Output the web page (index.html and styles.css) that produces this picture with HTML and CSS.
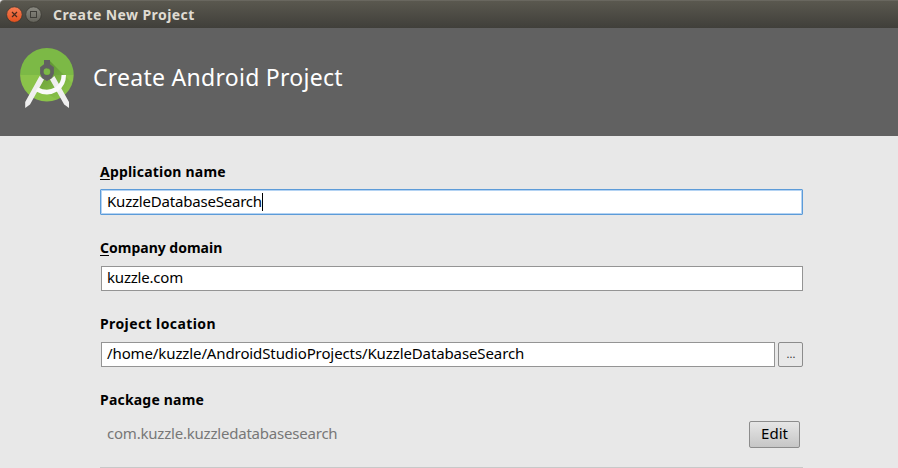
FILE: index.html
```html
<!DOCTYPE html>
<html lang="en">
<head>
<meta charset="utf-8">
<title>Create New Project</title>
<link rel="stylesheet" href="styles.css">
</head>
<body>
<div class="titlebar">
  <svg class="controls" width="37" height="18" viewBox="0 0 37 18">
    <defs>
      <linearGradient id="close" x1="0" y1="0" x2="0" y2="1"><stop offset="0" stop-color="#f67e55"/><stop offset="1" stop-color="#e2501d"/></linearGradient>
      <linearGradient id="max" x1="0" y1="0" x2="0" y2="1"><stop offset="0" stop-color="#8b8a82"/><stop offset="1" stop-color="#64635b"/></linearGradient>
    </defs>
    <circle cx="9.4" cy="8.6" r="7.8" fill="url(#close)" stroke="#393731" stroke-width=".8"/>
    <path d="M7 6l5 5m0-5l-5 5" stroke="#47291d" stroke-width="1.2"/>
    <circle cx="28.5" cy="8.6" r="7.8" fill="url(#max)" stroke="#393731" stroke-width=".8"/>
    <rect x="25.5" y="5.5" width="6" height="6" fill="none" stroke="#3e3d38"/>
  </svg>
  <span class="title">Create New Project</span>
</div>
<header class="banner">
  <svg class="logo" width="56" height="62" viewBox="19 47 56 62">
    <defs><clipPath id="disc"><circle cx="46.9" cy="74.8" r="26.8"/></clipPath>
    <linearGradient id="shade" x1="48" y1="62" x2="70" y2="88" gradientUnits="userSpaceOnUse"><stop offset="0" stop-color="#56862e" stop-opacity=".75"/><stop offset="1" stop-color="#679e37" stop-opacity=".1"/></linearGradient></defs>
    <g clip-path="url(#disc)">
      <path d="M19 47h56v28H19z" fill="#7cb946"/>
      <path d="M19 75h56v28H19z" fill="#8bc34a"/>
      <path d="M50 61L76 87V104H64L38 88 43 77z" fill="url(#shade)"/>
    </g>
    <path d="M39.6 76L25.2 102V108L30 104.6 44 79.6zM54.4 76L69 102V108L64.2 104.6 50 79.6z" fill="#efefef"/>
    <path d="M36.8 89.2Q47 95 56.5 89.3 63.8 84.5 63.8 75" fill="none" stroke="#fafafa" stroke-width="4.5"/>
    <path fill-rule="evenodd" d="M44 60h6v4.2l3.9 3V73.5L52 78l-2 1.2-3 1.8-3-1.8-2-1.2-1.9-4.5V67.2l3.9-3zM47 68.3a3.4 3.4 0 1 0 0 6.8 3.4 3.4 0 0 0 0-6.8z" fill="#616161"/>
    <circle cx="47" cy="71.7" r="3" fill="#7cb946"/>
  </svg>
  <h1 class="heading">Create Android Project</h1>
</header>
<main class="form">
  <section class="field">
    <label class="label l1"><u>A</u>pplication name</label>
    <div class="input focused"><span class="t1">KuzzleDatabaseSearch</span><i class="caret"></i></div>
  </section>
  <section class="field">
    <label class="label l2"><u>C</u>ompany domain</label>
    <div class="input plain"><span class="t2">kuzzle.com</span></div>
  </section>
  <section class="field">
    <label class="label l3">Project location</label>
    <div class="row"><div class="input plain grow"><span class="t3">/home/kuzzle/AndroidStudioProjects/KuzzleDatabaseSearch</span></div><button class="browse">...</button></div>
  </section>
  <section class="field last">
    <label class="label l4">Package name</label>
    <div class="row package"><span class="t4">com.kuzzle.kuzzledatabasesearch</span><button class="edit">Edit</button></div>
  </section>
</main>
</body>
</html>
```
FILE: styles.css
```css
* { box-sizing: border-box; }
body {
  margin: 0;
  height: 468px;
  overflow: hidden;
  background: #e8e8e8;
  color: #000;
  font: 15px/20px "Noto Sans", sans-serif;
}
.titlebar {
  height: 28px;
  display: flex;
  align-items: center;
  padding-left: 5px;
  background: linear-gradient(#5a584f, #403f3a);
  border-top: 1px solid #69675f;
  border-radius: 4px 0 0 0;
}
.title {
  margin-left: 11px;
  color: #dfdbd2;
  font-weight: 700;
  font-size: 14px;
  letter-spacing: .42px;
  white-space: nowrap;
}
.banner {
  height: 108px;
  display: flex;
  align-items: flex-start;
  padding: 19px 0 0 19px;
  background: #616161;
}
.heading {
  margin: 15px 0 0 18px;
  color: #fff;
  font-size: 23px;
  line-height: 30px;
  font-weight: 400;
  letter-spacing: .27px;
  white-space: nowrap;
}
.form { width: 703px; margin-left: 100px; padding-top: 26px; }
.field { height: 76px; }
.label {
  display: block;
  height: 27px;
  font-size: 14px;
  font-weight: 700;
  white-space: nowrap;
}
.label u { text-decoration-thickness: 1px; text-underline-offset: 2px; }
.l1, .l4 { letter-spacing: .2px; }
.l3 { letter-spacing: .4px; }
.input {
  height: 26px;
  display: flex;
  align-items: center;
  padding: 0 0 2px 6px;
  background: #fff;
  border: 1px solid #949494;
  white-space: nowrap;
}
.plain { height: 25px; margin: 1px 0 0 1px; padding: 0 0 3px 5px; }
.focused {
  border-color: #5c9bd8;
  border-radius: 1px;
  box-shadow: inset 0 0 0 1px #b4d3f3;
}
.t1 { letter-spacing: -.2px; }
.t2 { letter-spacing: -.2px; }
.t3 { letter-spacing: -.11px; }
.t4 { letter-spacing: -.21px; }
.caret { width: 1px; height: 18px; margin-top: 2px; background: #000; }
.row { display: flex; align-items: center; }
.grow { flex: 1; }
button {
  padding: 0;
  border: 1px solid #8c8c8c;
  border-radius: 2px;
  color: #000;
  font: 15px/20px "Noto Sans", sans-serif;
}
.browse {
  width: 25px;
  height: 25px;
  margin: 1px 0 0 3px;
  padding: 0 0 2px 1px;
  background: #e8e8e8;
  font-size: 11px;
  line-height: 18px;
  color: #333;
}
.last { height: 78px; border-bottom: 1px solid #c8c8c8; }
.package { align-items: flex-start; padding: 4px 3px 0 7px; justify-content: space-between; color: #777; }
.t4 { margin-top: 2px; }
.edit { width: 51px; height: 27px; padding-bottom: 4px; background: linear-gradient(#e6e6e6, #c6c6c6); }
```
